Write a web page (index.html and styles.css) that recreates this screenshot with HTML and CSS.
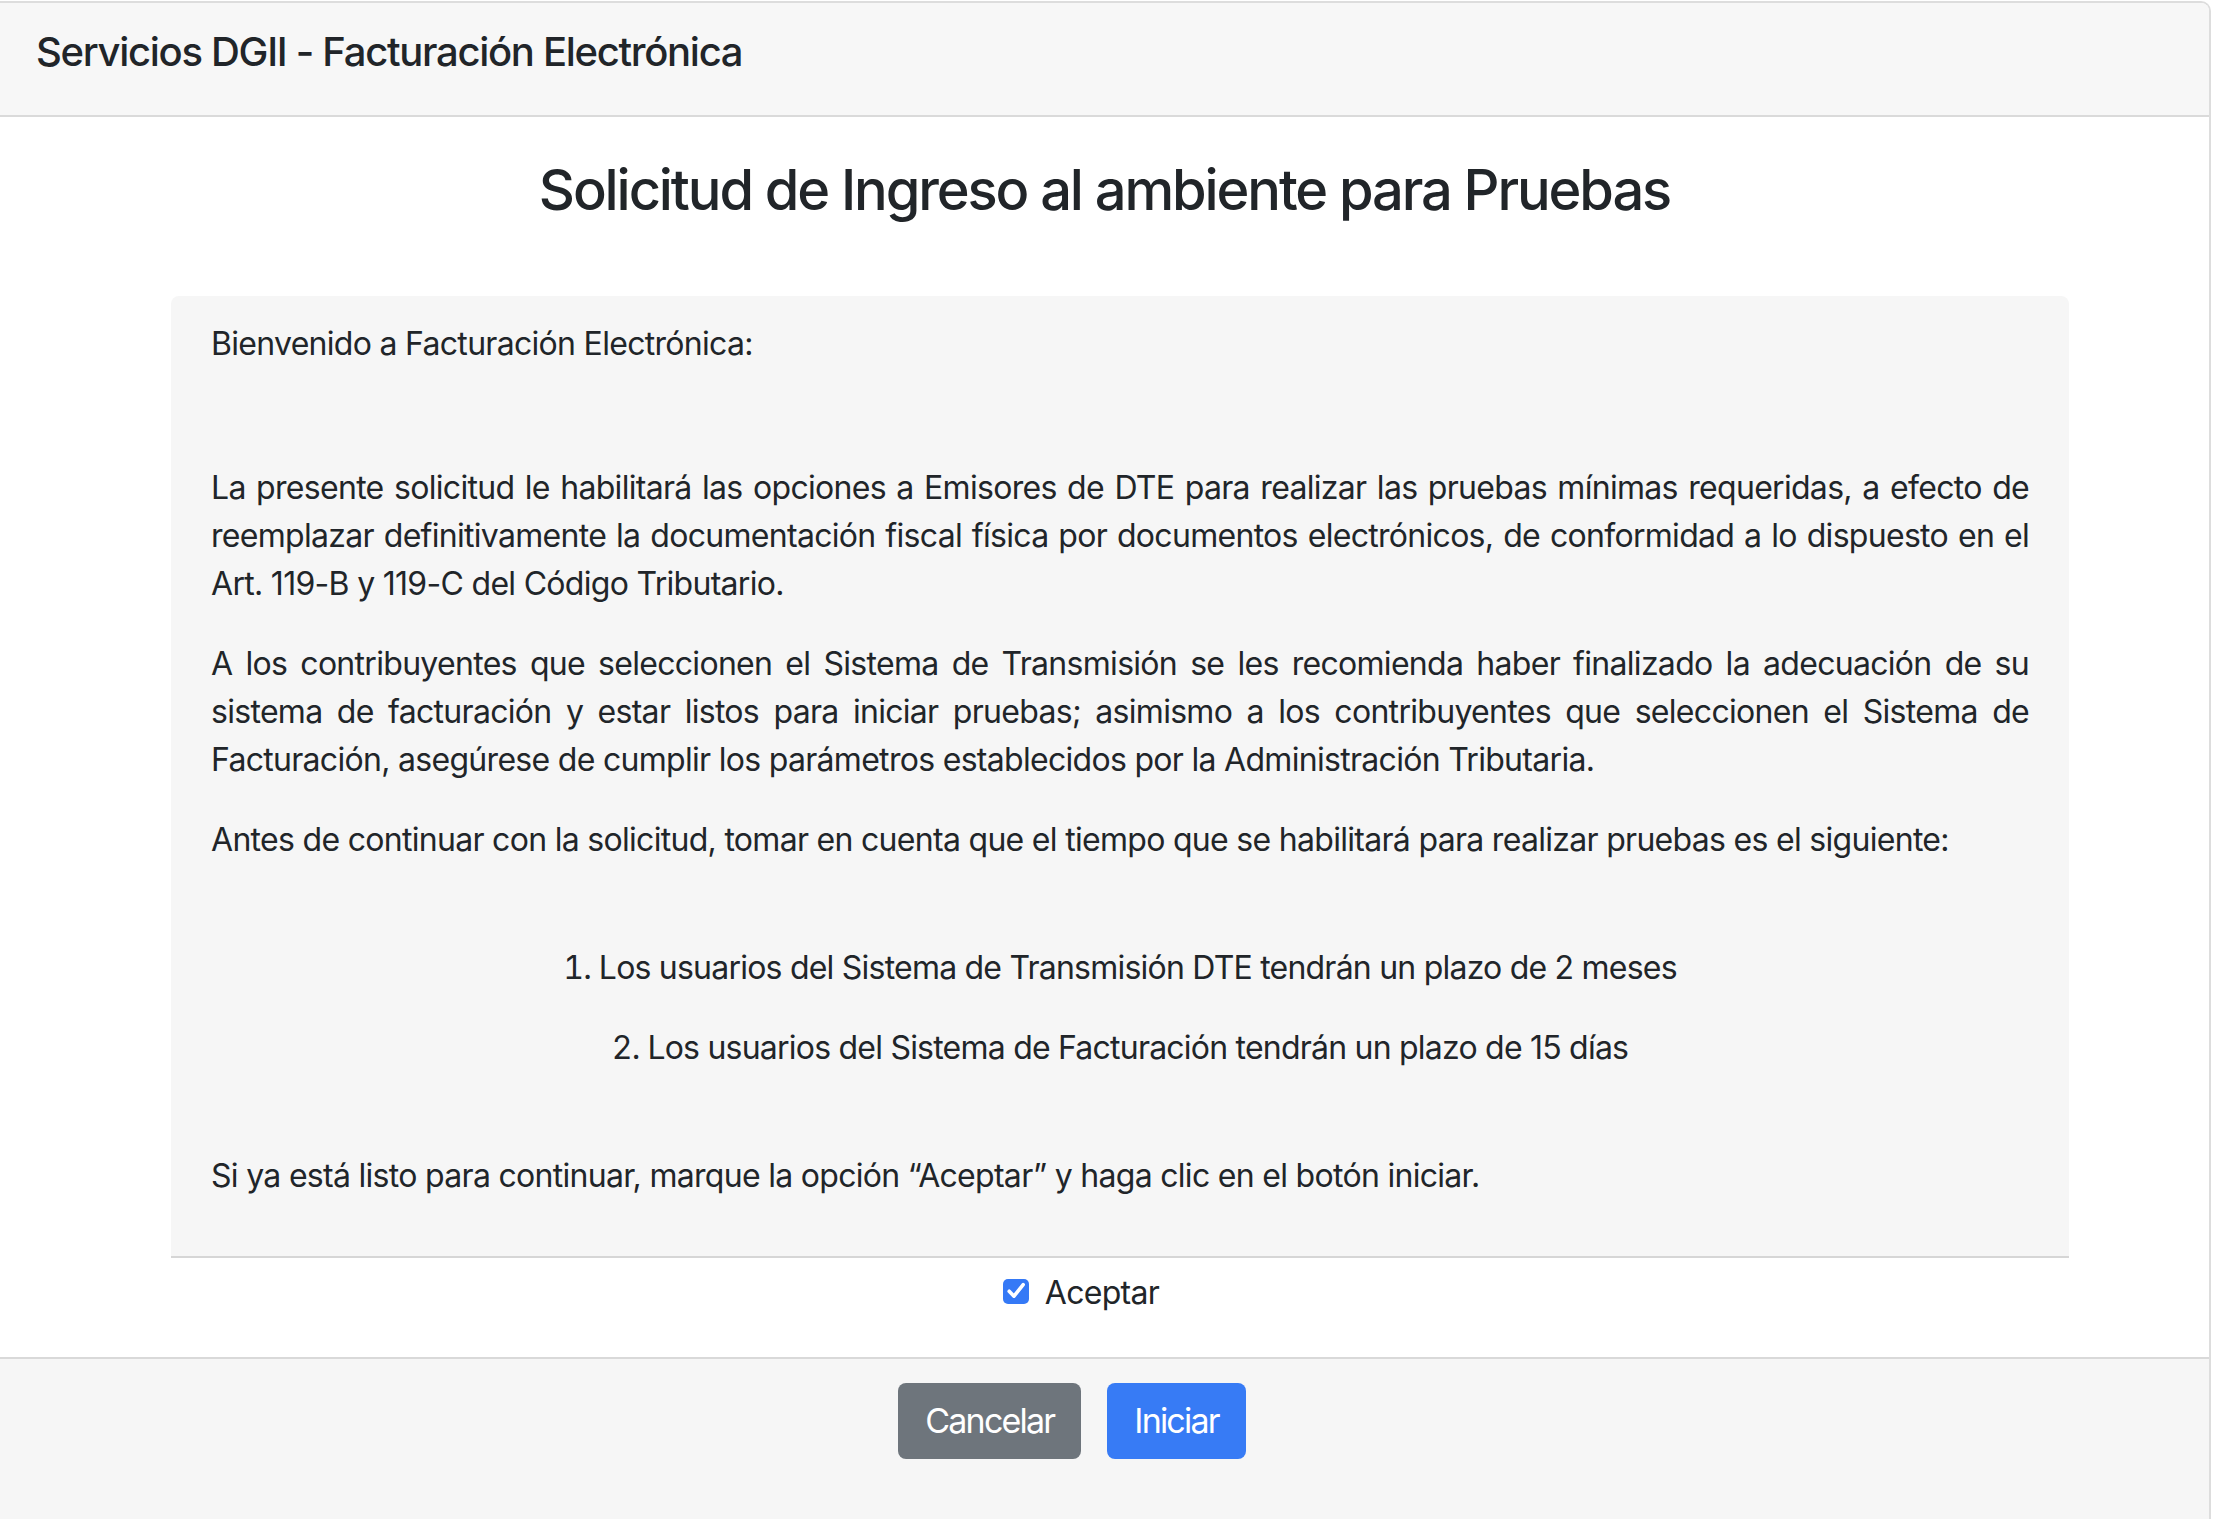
FILE: index.html
```html
<!DOCTYPE html>
<html lang="es">
<head>
<meta charset="utf-8">
<title>Servicios DGII - Facturación Electrónica</title>
<link rel="stylesheet" href="styles.css">
</head>
<body>
<div class="modal">
  <header class="modal-header">
    <h5 class="modal-title">Servicios DGII - Facturación Electrónica</h5>
  </header>
  <main class="modal-body">
    <h3 class="page-title">Solicitud de Ingreso al ambiente para Pruebas</h3>
    <section class="info-box">
      <p class="welcome">Bienvenido a Facturación Electrónica:</p>
      <p class="just">La presente solicitud le habilitará las opciones a Emisores de DTE para realizar las pruebas mínimas requeridas, a efecto de reemplazar definitivamente la documentación fiscal física por documentos electrónicos, de conformidad a lo dispuesto en el Art. 119-B y 119-C del Código Tributario.</p>
      <p class="just">A los contribuyentes que seleccionen el Sistema de Transmisión se les recomienda haber finalizado la adecuación de su sistema de facturación y estar listos para iniciar pruebas; asimismo a los contribuyentes que seleccionen el Sistema de Facturación, asegúrese de cumplir los parámetros establecidos por la Administración Tributaria.</p>
      <p class="lead-in">Antes de continuar con la solicitud, tomar en cuenta que el tiempo que se habilitará para realizar pruebas es el siguiente:</p>
      <ol class="plazos">
        <li>Los usuarios del Sistema de Transmisión DTE tendrán un plazo de 2 meses</li>
        <li>Los usuarios del Sistema de Facturación tendrán un plazo de 15 días</li>
      </ol>
      <p class="closing">Si ya está listo para continuar, marque la opción “Aceptar” y haga clic en el botón iniciar.</p>
    </section>
    <div class="accept-row">
      <label class="accept">
        <span class="chk" role="checkbox" aria-checked="true">
          <svg width="26" height="26" viewBox="0 0 26 26"><path d="M6.2 13.2 L11 18.2 L20.2 6.6" fill="none" stroke="#fff" stroke-width="3.6" stroke-linecap="round" stroke-linejoin="round"/></svg>
        </span>
        <span class="accept-text">Aceptar</span>
      </label>
    </div>
  </main>
  <footer class="modal-footer">
    <button class="btn btn-secondary" type="button">Cancelar</button>
    <button class="btn btn-primary" type="button">Iniciar</button>
  </footer>
</div>
</body>
</html>
```

FILE: styles.css
```css
html, body {
  margin: 0;
  padding: 0;
  background: #ffffff;
}

body {
  font-family: Inter, "Noto Sans", "Liberation Sans", sans-serif;
  font-size: 32px;
  line-height: 48px;
  letter-spacing: -0.7px;
  color: #212529;
}

.modal {
  box-sizing: border-box;
  width: 2211px;
  height: 1518px;
  margin-top: 1px;
  border-top: 2px solid #dddddd;
  border-right: 2px solid #dddddd;
  border-top-right-radius: 10px;
  display: flex;
  flex-direction: column;
  overflow: hidden;
}

.modal-header {
  background: #f7f7f7;
  border-bottom: 2px solid #dadada;
  padding: 19px 36px 33px;
}

.modal-title {
  margin: 0;
  font-size: 40px;
  line-height: 60px;
  font-weight: 500;
  letter-spacing: -1.3px;
}

.modal-body {
  padding-top: 40px;
}

.page-title {
  margin: 0 0 72px;
  font-size: 56px;
  line-height: 67px;
  font-weight: 500;
  letter-spacing: -2.1px;
  text-align: center;
}

.info-box {
  box-sizing: border-box;
  margin-left: 171px;
  width: 1898px;
  background: #f6f6f6;
  border-bottom: 2px solid #d6d6d6;
  border-radius: 8px 8px 0 0;
  padding: 24px 40px;
}

.info-box p {
  margin: 0 0 32px;
}

.info-box .welcome {
  margin-bottom: 96px;
}

.info-box .just {
  text-align: justify;
}

.info-box .lead-in {
  margin-bottom: 80px;
}

.plazos {
  margin: 0 0 80px;
  padding: 0;
  list-style-position: inside;
  text-align: center;
  letter-spacing: -0.78px;
}

.plazos li + li {
  margin-top: 32px;
}

.accept-row {
  display: flex;
  justify-content: center;
  padding: 11px 47px 40px 0;
}

.accept {
  display: flex;
  align-items: center;
  gap: 16px;
}

.chk {
  display: block;
  width: 26px;
  height: 25px;
  margin-top: -3px;
  background: #3579f6;
  border-radius: 5px;
  overflow: hidden;
}

.chk svg {
  display: block;
  margin-top: -1px;
}

.modal-footer {
  flex: 1;
  background: #f6f6f6;
  border-top: 2px solid #d9d9d9;
  display: flex;
  justify-content: center;
  align-items: flex-start;
  gap: 26px;
  padding: 24px 65px 0 0;
}

.btn {
  font-family: inherit;
  font-size: 34px;
  line-height: 54px;
  letter-spacing: -1.8px;
  padding: 11px 27px;
  border: 0;
  border-radius: 8px;
  color: #ffffff;
  cursor: pointer;
}

.btn-secondary {
  background: #6e757c;
}

.btn-primary {
  background: #377bf5;
}
```
